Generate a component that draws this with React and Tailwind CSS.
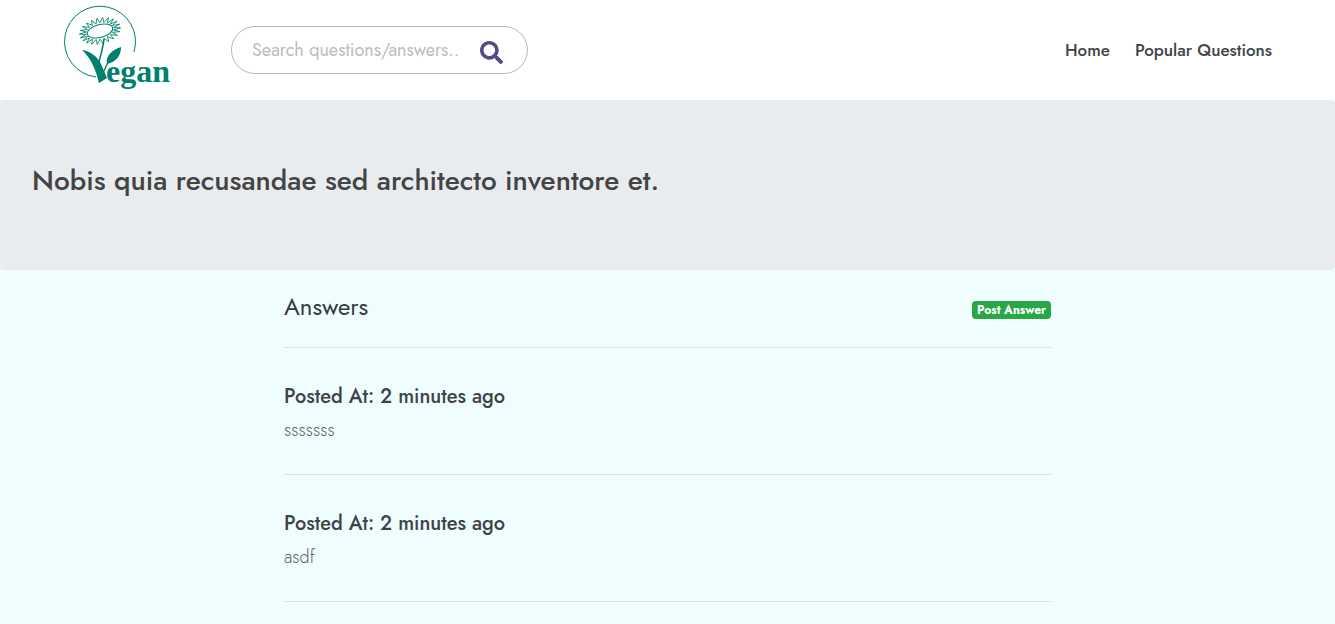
import { FaSearch } from 'react-icons/fa';

const answers = [
  { id: 1, time: '2 minutes ago', body: 'sssssss' },
  { id: 2, time: '2 minutes ago', body: 'asdf' },
];

function Logo() {
  const rays = [];
  const count = 22;
  for (let i = 0; i < count; i++) {
    const a = (i / count) * Math.PI * 2;
    const b = ((i + 0.5) / count) * Math.PI * 2;
    const c = ((i + 1) / count) * Math.PI * 2;
    rays.push(
      `${i === 0 ? 'M' : 'L'}${(100 + 14 * Math.cos(a)).toFixed(1)} ${(31 + 8 * Math.sin(a)).toFixed(1)}`,
      `L${(100 + 21 * Math.cos(b)).toFixed(1)} ${(31 + 13 * Math.sin(b)).toFixed(1)}`,
      `L${(100 + 14 * Math.cos(c)).toFixed(1)} ${(31 + 8 * Math.sin(c)).toFixed(1)}`,
    );
  }
  // viewBox uses page coordinates so the shapes line up with the reference
  return (
    <svg width="108" height="90" viewBox="62 5 108 90" className="shrink-0">
      <path d="M96 77 A35.5 35.5 0 1 1 134 52" fill="none" stroke="#00806f" strokeWidth="1" />
      <g transform="rotate(-14 100 31)">
        <path d={rays.join(' ') + ' Z'} fill="none" stroke="#00806f" strokeWidth="0.8" />
        <ellipse cx="100" cy="31" rx="13" ry="6.5" fill="none" stroke="#00806f" strokeWidth="1" />
      </g>
      <path d="M104 39 C103 47 101 55 98 65" fill="none" stroke="#00806f" strokeWidth="1.6" />
      <path d="M82 50 C90 51 97 56 101 64 L107 78 L99 83 C96 70 91 58 82 50 Z" fill="#00806f" />
      <path d="M99 82 L108 62" fill="none" stroke="#00806f" strokeWidth="1.4" />
      <path d="M107 64 C105 56 112 50 121 47 C121 56 116 62 107 64 Z" fill="#00806f" />
      <text x="106" y="82" fontFamily="'Liberation Serif', serif" fontWeight="700" fontSize="32" fill="#00806f">
        egan
      </text>
    </svg>
  );
}

export default function App() {
  return (
    <div className="min-h-screen bg-[#effdff] font-['Jost','Lato',sans-serif] text-[#343a40] overflow-hidden">
      {/* Header */}
      <header className="flex items-center h-[100px] bg-white pr-[63px]">
        <div className="ml-[62px]">
          <Logo />
        </div>
        <div className="flex items-center justify-between w-[297px] h-[48px] ml-[61px] pl-[20px] pr-[24px] bg-white border border-[#b8b8b8] rounded-full">
          <span className="text-[18px] text-[#bcbcbc] whitespace-nowrap">Search questions/answers..</span>
          <FaSearch size={23} className="text-[#544a8a] shrink-0 mt-[5px]" />
        </div>
        <nav className="flex items-center gap-[25px] ml-auto mt-[2px] text-[17px] font-medium text-[#3f4347]">
          <a>Home</a>
          <a>Popular Questions</a>
        </nav>
      </header>

      {/* Hero */}
      <section className="flex items-center h-[170px] px-8 bg-[#e9ecef] rounded">
        <h1 className="mb-[10px] text-[28px] font-medium leading-tight text-[#444444]">
          Nobis quia recusandae sed architecto inventore et.
        </h1>
      </section>

      {/* Answers */}
      <main className="w-[767px] ml-[284px]">
        <div className="flex items-center justify-between h-[78px] border-b border-[#d9e2e3]">
          <h2 className="text-2xl text-[#343a40] mt-[-4px]">Answers</h2>
          <span className="px-[5px] py-[3px] mt-[3px] text-[12px] leading-[12px] font-bold text-white bg-[#28a745] rounded">
            Post Answer
          </span>
        </div>
        {answers.map((answer) => (
          <div key={answer.id} className="h-[127px] pt-[34px] border-b border-[#d9e2e3]">
            <div className="text-[20px] leading-[30px] font-medium text-[#3f4347]">
              Posted At: {answer.time}
            </div>
            <p className="mt-[6px] text-[18px] leading-6 font-light text-[#5f6468]">{answer.body}</p>
          </div>
        ))}
      </main>
    </div>
  );
}
